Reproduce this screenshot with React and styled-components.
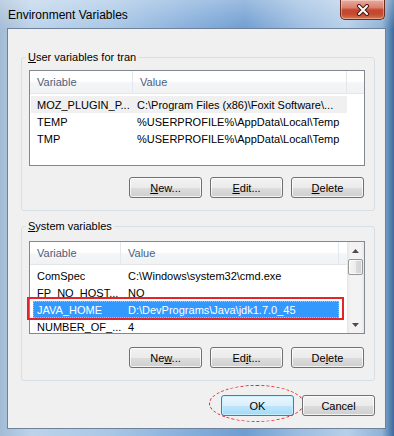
import React from 'react';
import styled, { createGlobalStyle } from 'styled-components';

const GlobalStyle = createGlobalStyle`
  html, body { margin: 0; padding: 0; }
  body {
    font-family: "Liberation Sans", Arial, sans-serif;
    font-size: 11px;
    color: #000;
  }
  * { box-sizing: border-box; }
`;

const Frame = styled.div`
  width: 394px;
  height: 436px;
  display: flex;
  flex-direction: column;
  background:
    linear-gradient(180deg, rgba(255, 255, 255, 0.3) 0px, rgba(255, 255, 255, 0) 30px),
    linear-gradient(90deg, #a3bcd6 0%, #bcd3ea 8%, #a9c7e6 28%, #82acda 50%, #6f9dd1 62%, #9cbde1 76%, #b7cfe9 88%, #8fb2d8 97%, #3d6b9d 100%);
`;

const TitleBar = styled.div`
  height: 28px;
  display: flex;
  justify-content: space-between;
  align-items: flex-start;
  padding: 0 9px 0 8px;
`;

const Title = styled.div`
  font-size: 12px;
  line-height: 15px;
  margin-top: 8px;
  color: #000;
`;

const CloseButton = styled.div`
  width: 45px;
  height: 20px;
  display: flex;
  align-items: center;
  justify-content: center;
  border: 1px solid #6b2a1e;
  border-top: none;
  border-radius: 0 0 5px 5px;
  background: linear-gradient(180deg, #e9ab9e 0%, #d9806d 40%, #c8462f 52%, #c24a30 75%, #d9794e 100%);
  box-shadow: inset 0 0 0 1px rgba(255, 255, 255, 0.35);
`;

const Client = styled.div`
  flex: 1;
  margin: 0 8px 7px 7px;
  border: 1px solid #6f8199;
  background: #f0f0f0;
  padding: 0 10px 0 13px;
  display: flex;
  flex-direction: column;
`;

const Group = styled.fieldset`
  margin: ${p => p.$top}px 0 0 0;
  padding: 0 9px 12px 7px;
  border: 1px solid #d5dfe5;
  border-radius: 3px;
  min-inline-size: 0;
`;

const Legend = styled.legend`
  padding: 0 2px;
  margin-left: -3px;
  line-height: 15px;
  font-size: 11px;
`;

const ListBox = styled.div`
  position: relative;
  margin-top: ${p => p.$top}px;
  height: ${p => p.$height}px;
  border: 1px solid #828790;
  background: #fff;
  display: flex;
`;

const ListMain = styled.div`
  flex: 1;
  min-width: 0;
  display: flex;
  flex-direction: column;
`;

const Header = styled.div`
  height: 23px;
  flex-shrink: 0;
  display: flex;
  background: linear-gradient(180deg, #ffffff 0%, #ffffff 45%, #f4f5f7 55%, #f1f2f4 100%);
  border-bottom: 1px solid #e4e6ea;
`;

const HeaderCell = styled.div`
  width: ${p => p.$width}px;
  flex-shrink: 0;
  padding-left: 7px;
  display: flex;
  align-items: center;
  color: #4c607a;
  border-right: 1px solid #e3e8ee;
`;

const HeaderFill = styled.div`
  flex: 1;
`;

const Rows = styled.div`
  padding-top: 2px;
  display: flex;
  flex-direction: column;
`;

const Row = styled.div`
  position: relative;
  height: 17px;
  display: flex;
  align-items: center;
  margin-left: ${p => p.$inset}px;
  width: ${p => p.$width}px;
  background: ${p => (p.$state === 'active' ? '#3399ff' : p.$state === 'inactive' ? '#f0f0f0' : 'transparent')};
  color: ${p => (p.$state === 'active' ? '#fff' : '#000')};
  outline: ${p => (p.$state === 'active' ? '1px dotted #f2b15a' : 'none')};
  outline-offset: -1px;

  ${p => p.$marked && `
    &::after {
      content: '';
      position: absolute;
      top: -4px;
      left: -6px;
      right: -5px;
      bottom: -2px;
      border: 2px solid #e4232b;
    }
  `}
`;

const Cell = styled.div`
  width: ${p => p.$width}px;
  flex-shrink: 0;
  padding-left: ${p => p.$pad}px;
  white-space: nowrap;
  overflow: hidden;
`;

const ScrollBar = styled.div`
  width: 17px;
  flex-shrink: 0;
  display: flex;
  flex-direction: column;
  align-items: center;
  background: linear-gradient(90deg, #e6e6e6 0%, #f3f3f3 20%, #f3f3f3 80%, #e9e9e9 100%);
`;

const ScrollArrow = styled.div`
  height: 17px;
  width: 15px;
  display: flex;
  align-items: center;
  justify-content: center;
`;

const Thumb = styled.div`
  width: 15px;
  height: 16px;
  border: 1px solid #979797;
  border-radius: 2px;
  background: linear-gradient(90deg, #f4f4f4 0%, #ececec 50%, #dcdcdc 51%, #d2d2d2 100%);
  box-shadow: inset 0 0 0 1px rgba(255, 255, 255, 0.7);
`;

const ButtonRow = styled.div`
  display: flex;
  justify-content: flex-end;
  gap: ${p => p.$gap}px;
  margin-top: ${p => p.$top}px;
  padding-right: ${p => p.$right}px;
`;

const Button = styled.button`
  position: relative;
  width: 73px;
  height: 21px;
  padding: 0;
  font-family: inherit;
  font-size: 11px;
  color: #000;
  border: 1px solid ${p => (p.$default ? '#3c7fb1' : '#707070')};
  border-radius: 3px;
  background: ${p => p.$default
    ? 'linear-gradient(180deg, #eaf6fd 0%, #d9f0fc 50%, #bee6fd 51%, #a7d9f5 100%)'
    : 'linear-gradient(180deg, #f2f2f2 0%, #ebebeb 50%, #dddddd 51%, #cfcfcf 100%)'};
  box-shadow: inset 0 0 0 1px ${p => (p.$default ? 'rgba(200, 240, 255, 0.9)' : 'rgba(255, 255, 255, 0.75)')};

  ${p => p.$circled && `
    &::after {
      content: '';
      position: absolute;
      top: -11px;
      left: -13px;
      right: -11px;
      bottom: -7px;
      border: 1px dashed #e4232b;
      border-radius: 50%;
    }
  `}
`;

const CloseGlyph = () => (
  <svg width="16" height="12" viewBox="0 0 16 12">
    <path d="M4 2 L12 10 M12 2 L4 10" stroke="#4a1a12" strokeWidth="4" strokeLinecap="round" />
    <path d="M4 2 L12 10 M12 2 L4 10" stroke="#fff" strokeWidth="2" strokeLinecap="round" />
  </svg>
);

const Arrow = ({ down }) => (
  <svg width="7" height="4" viewBox="0 0 7 4">
    <path d={down ? 'M0 0 L7 0 L3.5 4 Z' : 'M0 4 L7 4 L3.5 0 Z'} fill="#4d4d4d" />
  </svg>
);

const userVars = [
  { name: 'MOZ_PLUGIN_P...', value: 'C:\\Program Files (x86)\\Foxit Software\\...', state: 'inactive' },
  { name: 'TEMP', value: '%USERPROFILE%\\AppData\\Local\\Temp' },
  { name: 'TMP', value: '%USERPROFILE%\\AppData\\Local\\Temp' },
];

const systemVars = [
  { name: 'ComSpec', value: 'C:\\Windows\\system32\\cmd.exe' },
  { name: 'FP_NO_HOST...', value: 'NO' },
  { name: 'JAVA_HOME', value: 'D:\\DevPrograms\\Java\\jdk1.7.0_45', state: 'active', marked: true },
  { name: 'NUMBER_OF_...', value: '4' },
];

const App = () => {
  return (
    <>
      <GlobalStyle />
      <Frame>
        <TitleBar>
          <Title>Environment Variables</Title>
          <CloseButton><CloseGlyph /></CloseButton>
        </TitleBar>
        <Client>
          <Group $top={21}>
            <Legend><u>U</u>ser variables for tran</Legend>
            <ListBox $top={5} $height={96}>
              <ListMain>
                <Header>
                  <HeaderCell $width={103}>Variable</HeaderCell>
                  <HeaderCell $width={214}>Value</HeaderCell>
                  <HeaderFill />
                </Header>
                <Rows>
                  {userVars.map((v, i) => (
                    <Row key={i} $inset={1} $width={316} $state={v.state}>
                      <Cell $width={102} $pad={6}>{v.name}</Cell>
                      <Cell $width={214} $pad={4}>{v.value}</Cell>
                    </Row>
                  ))}
                </Rows>
              </ListMain>
            </ListBox>
            <ButtonRow $top={11} $gap={8} $right={1}>
              <Button><u>N</u>ew...</Button>
              <Button><u>E</u>dit...</Button>
              <Button><u>D</u>elete</Button>
            </ButtonRow>
          </Group>

          <Group $top={8}>
            <Legend><u>S</u>ystem variables</Legend>
            <ListBox $top={7} $height={93}>
              <ListMain>
                <Header>
                  <HeaderCell $width={91}>Variable</HeaderCell>
                  <HeaderCell $width={218}>Value</HeaderCell>
                  <HeaderFill />
                </Header>
                <Rows>
                  {systemVars.map((v, i) => (
                    <Row key={i} $inset={3} $width={306} $state={v.state} $marked={v.marked}>
                      <Cell $width={88} $pad={4}>{v.name}</Cell>
                      <Cell $width={218} $pad={7}>{v.value}</Cell>
                    </Row>
                  ))}
                </Rows>
              </ListMain>
              <ScrollBar>
                <ScrollArrow><Arrow /></ScrollArrow>
                <Thumb />
                <div style={{ flex: 1 }} />
                <ScrollArrow><Arrow down /></ScrollArrow>
              </ScrollBar>
            </ListBox>
            <ButtonRow $top={13} $gap={8} $right={1}>
              <Button>Ne<u>w</u>...</Button>
              <Button>Ed<u>i</u>t...</Button>
              <Button>De<u>l</u>ete</Button>
            </ButtonRow>
          </Group>

          <ButtonRow $top={14} $gap={8} $right={0}>
            <Button $default $circled>OK</Button>
            <Button>Cancel</Button>
          </ButtonRow>
        </Client>
      </Frame>
    </>
  );
};

export default App;
